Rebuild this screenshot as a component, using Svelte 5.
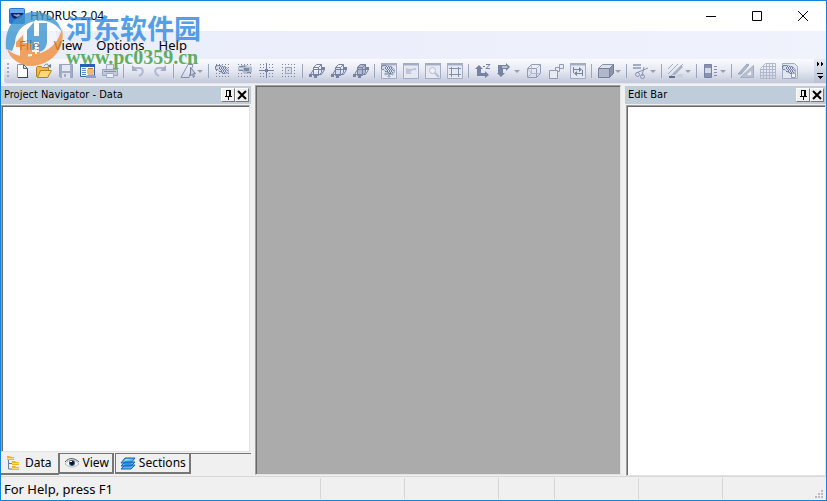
<script>
    const ink = "#7681a3";
    const mid = "#a2acc4";
    const pale = "#d3d9e6";

    // each shape: [path, fill, stroke, stroke width, dash]
    const dots = ["M1 1.5h14M1 4.5h14M1 7.5h14M1 10.5h14M1 13.5h14", "none", ink, 1, "1 2"];
    const hand = [
        ["M0.5 4.5l2-2h4l2 1h2l3 3v3l-2 1h-3l-4-2-2-2h-2z", pale, mid, 1],
        ["M1 2.5h4M0.5 3v3M1 6.5h2M4 8.5h3M8 10.5h2", "none", ink, 1],
        ["M5 3.5h5M4 5.5h8M6 7.5h7M7 9.5h5", "none", ink, 1, "1 1"],
        ["M4 4.5h7M5 6.5h8M6 8.5h6", "none", ink, 1, "1 1"],
    ];
    const frame = [
        ["M0.5 0.5h15v15h-15z", "#e6e9f2", mid, 1],
        ["M0 0h16v2H0z", mid, "none"],
        ["M1 2.5h14", "none", "#c7cedd", 1],
    ];
    const cubeLines = [
        ["M4.5 4.5l3-3h5v8l-3 3h-5z", "none", ink, 1],
        ["M4.5 4.5h5v8M9.5 4.5l3-3", "none", ink, 1],
        ["M1.5 11.5l3-5h11l-3 5z", "none", ink, 1],
        ["M0 11h3v3H0zM13 4h3v3h-3zM5 13h3v2H5z", ink, "none"],
    ];

    const icons = {
        new: [
            ["M3.5 1.5h6l4 4v9h-10z", "#fbfdff", "#8b97aa", 1],
            ["M4 14h10v1H4zM13 6h1v9h-1z", "#35445f", "none"],
            ["M9.5 1.5v4h4z", "#dce7f3", "#52637e", 1],
        ],
        open: [
            ["M0.5 13.5v-9l1-1h4l1 1h6v9z", "#eeb64c", "#b98221", 1],
            ["M1.5 14.5l3-7h11l-4 7z", "#ffdb76", "#b97f1c", 1],
            ["M8 3c2-3 4-2 5 0", "none", "#6e7d93", 1],
            ["M11 3l4-2v4z", "#6e7d93", "none"],
        ],
        save: [
            ["M1.5 1.5h13v13h-12l-1-1z", mid, "#98a2bd", 1],
            ["M4 2h8v6H4z", "#e4e8f1", "none"],
            ["M4 10h8v5H4z", "#dce1eb", "none"],
            ["M6 11h2v3H6z", mid, "none"],
        ],
        properties: [
            ["M0.5 1.5h14v12h-14z", "#f8fbff", "#3663a5", 1],
            ["M0 1h15v3H0z", "#2860bb", "none"],
            ["M2 5.5h4M2 7.5h4M2 9.5h4M2 11.5h4", "none", "#588dd2", 1],
            ["M6 15v-2l3-2h4l3 2v2z", "#7fa5d8", "none"],
            ["M7 7l2-2h3l2 2v3l-2 2H9l-2-2z", "#f1b67a", "none"],
            ["M8 5h5v1H8z", "#bd7536", "none"],
        ],
        print: [
            ["M4.5 1.5h7v5h-7z", "#e5e8f0", mid, 1],
            ["M0.5 6.5h15v6h-15z", "#c3cad9", "#98a2bb", 1],
            ["M2 8h12v1H2z", "#8590ab", "none"],
            ["M4.5 10.5h7v4h-7z", "#edf0f5", mid, 1],
        ],
        undo: [["M4 5h5c5 0 5 6 0 8", "none", "#b0b9ce", 2], ["M2 2v6h6z", "#a3adc5", "none"]],
        redo: [["M12 5H7c-5 0-5 6 0 8", "none", "#b0b9ce", 2], ["M14 2v6H8z", "#a3adc5", "none"]],
        select: [
            ["M1 14.5L8 1.5h5L9 14.5z", "none", "#858fac", 1],
            ["M10.5 4.5v8l2-1 1 3 1-1-1-3h2z", "#c5ccdb", "#7681a3", 1],
        ],
        gridHand: [dots, ...hand],
        gridEye: [
            dots,
            ["M1 4l4-2h5l5 2v5l-4 2H7L5 8H1z", "#b4bccf", "none"],
            ["M2 3h6v1H2zM7 5h5v3H7zM2 7h4v1H2zM10 9h4v1h-4z", "#7e89a8", "none"],
            ["M2 5h4v1H2zM10 2h3v2h-3z", "#d9deea", "none"],
        ],
        gridCross: [dots, ["M7.5 0v15M0 7.5h15", "none", ink, 1], ["M6 6h3v3H6z", ink, "none"]],
        gridPoint: [dots, ["M4.5 4.5h6v6h-6z", "#d9deea", "#9ca6be", 1], ["M7 7h1v1H7z", ink, "none"]],
        cubeOrbit: [["M5 5h4v4H5z", "#eef0f6", "none"], ...cubeLines],
        cubeRotate: [["M5 5h4v7H5z", pale, "none"], ...cubeLines],
        cubeSolid: [["M4 4l3-3h6v8l-3 3H4z", "#b1b9cc", "none"], ...cubeLines],
        panView: [...frame, ["M8 8v6M4 11h8", "none", mid, 2], ["M8 15l-2-2h4zM3 11l2-2v4zM13 11l-2-2v4z", mid, "none"], ...hand],
        prevView: [...frame, ["M3 5v6h6L7 9l3-2h3V5l-6 1z", "#bcc4d5", "none"]],
        zoomView: [
            ...frame,
            ["M4.5 7.5a3 3 0 1 0 6 0a3 3 0 1 0-6 0", "#eef1f7", "#b4bdd0", 1],
            ["M10 10l4 4", "none", "#b4bdd0", 2],
        ],
        fitView: [...frame, ["M4.5 4v10M11.5 4v10M2 5.5h12M2 11.5h12", "none", "#858fa9", 1]],
        axes: [
            ["M4 2l4 4H6v4h4V8l4 4-4 3v-2H2V6H0z", ink, "none"],
            ["M8 3.5h2M11 1.5h4l-4 4h4", "none", ink, 1],
        ],
        axesDown: [["M1 2h8V0l4 4-4 4V6H6v4h2l-4 4-4-4h1z", ink, "none"], ["M5 3h5l1 1-1 1H5z", "#b8c0d2", "none"]],
        wire: [
            ["M5.5 1.5h9l-4 4h-9zM1.5 5.5h9v9h-9zM14.5 1.5v9l-4 4", "none", "#929cb6", 1],
            ["M5.5 1.5v9h9M5.5 10.5l-4 4M1.5 5.5l4 5M10.5 5.5l4-4", "none", "#b0b9ce", 1],
        ],
        boxes: [
            ["M11.5 1.5h4v4h-4z", "#e8ebf3", "#909ab4", 1],
            ["M7.5 4.5h4v4h-4z", "#e8ebf3", "#909ab4", 1],
            ["M1.5 7.5h8v8h-8z", "#e8ebf3", "#909ab4", 1],
        ],
        dimension: [
            ...frame,
            ["M3.5 4v6M12.5 7v6M4 6.5h6M6 10.5h6", "none", ink, 1],
            ["M9 4l3 2.5L9 9zM7 8l-3 2.5L7 13z", ink, "none"],
        ],
        solid: [
            ["M0.5 5.5l4-4h11l-4 4z", "#dce1eb", "#858fa9", 1],
            ["M0.5 5.5h11v9h-11z", "#b0b8ca", "#76809a", 1],
            ["M11.5 5.5l4-4v9l-4 4z", "#8a94ad", "#76809b", 1],
        ],
        cut: [
            ["M0 1h8v2H0zM0 4h8v2H0z", mid, "none"],
            ["M3 10l12-5M9 13l2-9", "none", "#8892ad", 1],
            ["M2.5 11.5a2 2 0 1 0 4 0a2 2 0 1 0-4 0M7.5 13.5a2 2 0 1 0 4 0a2 2 0 1 0-4 0", "none", "#8892ad", 1],
        ],
        hatch: [
            ["M0 6l5-5M0 11L10 1M1 15L15 1", "none", "#a0aac1", 1],
            ["M5 10l8-8 2 2-8 8H5z", "#a9b2c6", "none"],
            ["M1 13h6v2H1z", "#606d8b", "none"],
            ["M9 11h6v4H8z", "#cbd1de", "none"],
        ],
        legend: [
            ["M1.5 1.5h7v13h-7z", "#8993ad", "#7681a3", 1],
            ["M2 5h6v5H2z", "#d3d8e4", "none"],
            ["M11 3.5h3M11 6.5h3M11 9.5h3M11 12.5h3", "none", "#838daa", 1],
        ],
        triangle: [
            ["M2.5 14.5l13-12v12z", "#b9c1d2", mid, 1],
            ["M9 12h4V8z", "#f1f3f7", "none"],
            ["M1 10l8-9 2 1-8 9H0z", "#b3bbcc", "#98a2ba", 1],
        ],
        mesh: [["M5.5 0.5h10v15h-15v-10zM0 9.5h16M1 6.5h15M4 3.5h12M0 12.5h16M3.5 3v13M6.5 0v16M9.5 0v16M12.5 0v16", "none", "#b0b9cc", 1]],
        pick: [["M0.5 0.5h12l3 3v12h-15z", "#e2e6ee", mid, 1], ["M9.5 10.5h4v4h-4z", "#f3f5f9", "#929cb6", 1], ...hand],
    };

    const groups = [
        ["new", "open", "save", "properties", "print"],
        ["undo", "redo"],
        ["select+"],
        ["gridHand", "gridEye", "gridCross", "gridPoint"],
        ["cubeOrbit", "cubeRotate", "cubeSolid"],
        ["panView", "prevView", "zoomView", "fitView"],
        ["axes", "axesDown+", "wire", "boxes", "dimension"],
        ["solid+"],
        ["cut+"],
        ["hatch+"],
        ["legend+"],
        ["triangle", "mesh", "pick"],
    ];

    const menus = ["File", "View", "Options", "Help"];
    const tabs = ["Data", "View", "Sections"];
    let activeTab = $state("Data");
</script>

{#snippet paneTitle(title)}
    <header class="pane-title">
        <h2>{title}</h2>
        <button class="mini" aria-label="Auto hide">
            <svg width="10" height="10" shape-rendering="crispEdges">
                <path d="M3 0h5v6h1v1H6v3H5V7H2V6h1zM4 1v5h2V1z" fill-rule="evenodd" />
            </svg>
        </button>
        <button class="mini" aria-label="Close pane">
            <svg width="10" height="10"><path d="M1 1l8 8M9 1L1 9" stroke="#000" stroke-width="2" /></svg>
        </button>
    </header>
{/snippet}

<div class="window">
    <div class="titlebar">
        <svg class="app-icon" width="16" height="16">
            <rect width="16" height="16" rx="2" fill="#2476d8" />
            <path d="M1 1h14v4H1z" fill="#65aaf0" />
            <path d="M2 5h12c0 3-2 6-6 6S2 8 2 5z" fill="#151b5b" />
            <path d="M4 7c2-2 3 1 5-1l3 1-4 2z" fill="#7eaad6" />
        </svg>
        <h1>HYDRUS 2.04</h1>
        <div class="controls">
            <button aria-label="Minimize"><svg width="12" height="12"><path d="M1 6.5h10" /></svg></button>
            <button aria-label="Maximize"><svg width="12" height="12"><path d="M1.5 1.5h9v9h-9z" /></svg></button>
            <button aria-label="Close"><svg width="12" height="12"><path d="M1 1l10 10M11 1L1 11" /></svg></button>
        </div>
    </div>

    <nav class="menubar">
        {#each menus as menu}
            <button>{menu}</button>
        {/each}
    </nav>

    <div class="toolbar">
        <div class="tools">
            <span class="grip"></span>
            {#each groups as group, i}
                {#if i > 0}<span class="separator"></span>{/if}
                {#each group as item}
                    {@const name = item.replace("+", "")}
                    <button class="tool" class:dropdown={item.endsWith("+")} aria-label={name}>
                        <svg width="16" height="16">
                            {#each icons[name] as [d, fill, stroke, width, dash]}
                                <path {d} {fill} {stroke} stroke-width={width} stroke-dasharray={dash} />
                            {/each}
                        </svg>
                        {#if item.endsWith("+")}<span class="arrow"></span>{/if}
                    </button>
                {/each}
            {/each}
        </div>
        <button class="overflow" aria-label="Toolbar options">
            <svg width="10" height="18" shape-rendering="crispEdges">
                <path d="M2 0l2 2-2 2zM6 0l2 2-2 2zM2 11h6v1H2zM2 14h6l-3 3z" />
            </svg>
        </button>
    </div>

    <main>
        <section class="pane navigator">
            {@render paneTitle("Project Navigator - Data")}
            <div class="sheet"></div>
            <div class="tabs" role="tablist">
                {#each tabs as tab}
                    <button role="tab" aria-selected={tab === activeTab} class:active={tab === activeTab} onclick={() => (activeTab = tab)}>
                        <svg width="16" height="16">
                            {#if tab === "Data"}
                                <path d="M2.5 5v9H6M2.5 8.5H6" fill="none" stroke="#6580a8" />
                                <path d="M1 1h3l1 1h3v3H1zM6 6h3l1 1h3v3H6zM6 11h3l1 1h3v3H6z" fill="#f1b52d" />
                                <path d="M1 3.5h7M6 8.5h7M6 13.5h7" stroke="#ffdc73" />
                            {:else if tab === "View"}
                                <path d="M1 9c3-5 10-5 14 0-4 4-10 4-14 0z" fill="#f1f3f6" stroke="#b3b6bc" />
                                <path d="M1 7c4-5 10-4 14 0" fill="none" stroke="#555" />
                                <circle cx="8" cy="8" r="3" fill="#315a83" />
                                <circle cx="8" cy="8" r="2" fill="#071421" />
                                <path d="M6 6h2v1H6z" fill="#fff" />
                            {:else}
                                <path d="M1 14l4-4h10l-4 4zM1 11l4-4h10l-4 4zM1 8l4-5h10l-4 5z" fill="#55b9f3" stroke="#165db8" />
                                <path d="M4 6l2-2h6z" fill="#a9e3ff" />
                            {/if}
                        </svg>
                        {tab}
                    </button>
                {/each}
            </div>
        </section>
        <section class="workspace" aria-label="Workspace"></section>
        <section class="pane edit">
            {@render paneTitle("Edit Bar")}
            <div class="sheet"></div>
        </section>
    </main>

    <footer>
        <span class="message">For Help, press F1</span>
        <span class="cell wide"></span>
        <span class="cell medium"></span>
        <span class="cell narrow"></span>
        <span class="cell wide"></span>
        <span class="cell wide"></span>
        <span class="cell last">
            <svg width="9" height="9" fill="#bbb"><path d="M6 0h2v2H6zM3 3h2v2H3zM6 3h2v2H6zM0 6h2v2H0zM3 6h2v2H3zM6 6h2v2H6z" /></svg>
        </span>
    </footer>

    <div class="watermark">
        <svg width="58" height="56" viewBox="0 0 58 56">
            <circle cx="29" cy="29" r="23" fill="#fff" opacity="0.6" />
            <path d="M1 38C-1 17 10 1 30 1c14 0 24 8 27 20C50 11 40 8 31 10 17 12 10 22 10 32l-3 8z" fill="#3f96cf" />
            <path d="M57 17c4 20-9 36-29 38C15 55 5 48 2 38c9 8 19 9 28 6C45 40 54 31 57 17z" fill="#f08f3c" />
            <path d="M22 19l7-8v14h5V12h8v18c0 6-3 10-8 11V31h-5v8h-7z" fill="#3f96cf" />
            <path d="M11 31l7-7v8h9v9h8v11l-8 3V43h-4v12l-8-3V36h-4z" fill="#f08f3c" />
            <path d="M20 15v15M31 9v15M31 33v10" fill="none" stroke="#fff" stroke-width="2" />
        </svg>
        <div>
            <strong>河东软件园</strong>
            <em>www.pc0359.cn</em>
        </div>
    </div>
</div>

<style>
    :global(body) {
        margin: 0;
    }

    .window {
        position: relative;
        box-sizing: border-box;
        height: 100vh;
        display: flex;
        flex-direction: column;
        border: 1px solid #1583d8;
        background: #f0f0f0;
        color: #000;
        font: 12px/16px "Noto Sans", sans-serif;
        overflow: hidden;
    }

    button {
        display: flex;
        align-items: center;
        justify-content: center;
        padding: 0;
        border: 0;
        background: none;
        color: inherit;
        font: inherit;
    }

    svg {
        flex: none;
        display: block;
    }

    h1,
    h2 {
        margin: 0;
        font: inherit;
    }

    .titlebar {
        display: flex;
        align-items: center;
        flex: none;
        height: 30px;
        padding-left: 8px;
        background: #fff;
    }

    .titlebar h1 {
        flex: 1;
        margin-left: 5px;
    }

    .controls {
        display: flex;
    }

    .controls button {
        width: 46px;
        height: 28px;
    }

    .controls path {
        fill: none;
        stroke: #000;
    }

    .menubar {
        display: flex;
        flex: none;
        height: 28px;
        padding-left: 11px;
        background: linear-gradient(90deg, #e9ecfa, #f0f3fc);
        font-size: 13px;
    }

    .menubar button {
        padding: 0 7px;
    }

    .toolbar {
        display: flex;
        flex: none;
        height: 24px;
        padding-left: 3px;
        background: #f0f3fc;
        border-bottom: 1px solid #e4e7ef;
    }

    .tools {
        display: flex;
        align-items: center;
        flex: 1;
        min-width: 0;
        overflow: hidden;
        border-radius: 3px 0 0 3px;
        background: linear-gradient(#fafbfe, #e5e8f2 50%, #c2c8da);
    }

    .grip {
        flex: none;
        width: 2px;
        height: 16px;
        margin: 0 2px 0 3px;
        background: repeating-linear-gradient(#a4abbd 0 2px, transparent 2px 4px);
    }

    .tool {
        flex: none;
        width: 22px;
        height: 22px;
    }

    .dropdown {
        width: 29px;
        gap: 1px;
    }

    .arrow {
        border: 3px solid transparent;
        border-top-color: #9b9fa9;
        border-bottom: 0;
    }

    .separator {
        flex: none;
        width: 1px;
        height: 14px;
        margin: 0 3px 0 2px;
        background: #9da5bd;
    }

    .overflow {
        width: 12px;
        background: linear-gradient(#e8ebf5, #b9c0d4);
    }

    main {
        flex: 1;
        min-height: 0;
        display: flex;
        gap: 4px;
    }

    .pane {
        display: flex;
        flex-direction: column;
        flex: none;
        padding-top: 2px;
    }

    .navigator {
        width: 250px;
    }

    .edit {
        width: 201px;
    }

    .pane-title {
        display: flex;
        align-items: center;
        height: 18px;
        padding: 0 2px 0 3px;
        margin-bottom: 1px;
        background: #bfcddb;
        font: 11px/16px "DejaVu Sans Condensed", "Liberation Sans", sans-serif;
    }

    .pane-title h2 {
        flex: 1;
    }

    .mini {
        box-sizing: border-box;
        width: 14px;
        height: 14px;
        border: 1px solid;
        border-color: #fff #777 #777 #fff;
        background: #f0f0f0;
    }

    .sheet,
    .workspace {
        flex: 1;
        border: 1px solid;
        border-color: #a0a0a0 #e3e3e3 #e3e3e3 #a0a0a0;
        box-shadow: inset 1px 1px #696969;
        background: #fff;
    }

    .navigator .sheet {
        margin-right: 1px;
    }

    .edit .sheet {
        margin-left: 1px;
    }

    .workspace {
        margin: 1px 0;
        background: #ababab;
    }

    .tabs {
        display: flex;
        align-items: flex-start;
        height: 23px;
        padding-top: 1px;
    }

    .tabs button {
        box-sizing: border-box;
        height: 21px;
        margin-right: 1px;
        padding: 0 3px 0 4px;
        gap: 3px;
        border: 1px solid #777;
        border-width: 1px 2px 2px 1px;
    }

    .tabs .active {
        height: 22px;
        margin: 0;
        padding: 0 6px 0 5px;
        border-width: 0 1px 2px 0;
        gap: 3px;
    }

    .tabs::after {
        content: "";
        flex: 1;
        border-top: 1px solid #777;
        margin-left: -1px;
    }

    footer {
        display: flex;
        flex: none;
        height: 23px;
        border-top: 1px solid #d7d7d7;
        background: #f0f0f0;
    }

    .message {
        flex: 1;
        padding: 4px 3px;
        font-size: 13px;
    }

    .cell {
        box-sizing: border-box;
        margin: 1px 0;
        border-left: 1px solid #d7d7d7;
    }

    .wide {
        width: 84px;
    }

    .medium {
        width: 94px;
    }

    .narrow {
        width: 56px;
    }

    .last {
        display: flex;
        align-items: flex-end;
        justify-content: flex-end;
        width: 104px;
        padding-right: 2px;
    }

    .watermark {
        position: absolute;
        left: 4px;
        top: 10px;
        display: flex;
        gap: 3px;
        opacity: 0.8;
        pointer-events: none;
    }

    .watermark div {
        display: flex;
        flex-direction: column;
    }

    .watermark strong {
        color: #2b88e4;
        font: bold 27px/34px "Noto Sans CJK SC", sans-serif;
    }

    .watermark em {
        color: #3a9e3c;
        font: bold 20px/24px "Liberation Serif", serif;
    }
</style>
